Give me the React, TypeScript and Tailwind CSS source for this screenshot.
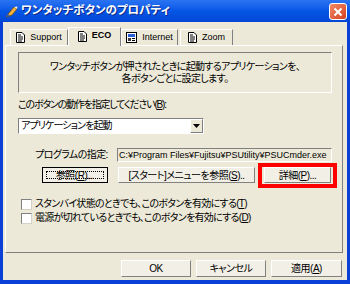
import React from "react";

const jp = "font-['Liberation_Sans','Noto_Sans_CJK_JP',sans-serif] [font-feature-settings:'palt']";

function PageIcon({ kind = "page" }: { kind?: "page" | "net" }) {
    if (kind === "net") {
        return (
            <svg width="11" height="11" viewBox="0 0 11 11" className="shrink-0">
                <rect x="0.5" y="0.5" width="10" height="10" fill="#fff" stroke="#000" />
                <rect x="2" y="2" width="7" height="3" fill="#2b5fd9" />
                <rect x="2" y="6" width="3" height="3" fill="#3a3a3a" />
                <rect x="6" y="6" width="3" height="1" fill="#000" />
                <rect x="6" y="8" width="3" height="1" fill="#000" />
            </svg>
        );
    }
    return (
        <svg width="9" height="11" viewBox="0 0 9 11" className="shrink-0">
            <path d="M0.5 0.5 H6 L8.5 3 V10.5 H0.5 Z" fill="#fff" stroke="#000" />
            <path d="M2 3 H5 M2 5 H7 M2 7 H7 M2 9 H6" stroke="#000" strokeWidth="1" />
        </svg>
    );
}

function Tab({ label, w, active, icon }: { label: string; w: number; active?: boolean; icon?: "page" | "net" }) {
    return (
        <div
            style={{ width: w }}
            className={
                active
                    ? "h-[19px] -mb-[1px] z-10 flex items-center justify-center gap-[5px] bg-[#ece9d8] border-t border-l border-white border-r border-r-[#808080] text-[9px] font-bold pb-[2px]"
                    : "h-[16px] flex items-center justify-center gap-[5px] bg-[#ece9d8] border-t border-l border-white border-r border-r-[#808080] text-[9px]"
            }
        >
            <PageIcon kind={icon} />
            <span>{label}</span>
        </div>
    );
}

function Btn({ children, w, def }: { children: React.ReactNode; w: number; def?: boolean }) {
    return (
        <div
            style={{ width: w }}
            className={
                def
                    ? "h-full border border-black bg-[#f1efe6] flex items-stretch"
                    : "h-full bg-[#f1efe6] border border-t-white border-l-white border-b-[#808080] border-r-[#808080] flex items-center justify-center text-[10px] tracking-[-0.5px]"
            }
        >
            {def ? (
                <div className="flex-1 m-[3px] border border-dotted border-black flex items-center justify-center text-[10px] tracking-[-0.5px]">
                    {children}
                </div>
            ) : (
                children
            )}
        </div>
    );
}

function Check({ children }: { children: React.ReactNode }) {
    return (
        <div className="flex items-center h-[12px] gap-[3px] text-[10px] leading-[12px] tracking-[-0.7px]">
            <div className="w-[11px] h-[11px] bg-white border border-t-[#808080] border-l-[#808080] border-b-[#d4d0c8] border-r-[#d4d0c8] shrink-0" />
            <span>{children}</span>
        </div>
    );
}

export default function App() {
    return (
        <div className={`w-[350px] h-[284px] bg-[#0a3fd8] flex flex-col overflow-hidden text-black ${jp}`}>
            {/* Title bar */}
            <div className="h-[22px] shrink-0 flex items-center pl-[5px] pr-[3px] bg-gradient-to-b from-[#2a74f2] via-[#0556e6] to-[#0446d4]">
                <svg width="13" height="13" viewBox="0 0 13 13" className="shrink-0">
                    <path d="M1 12 L4 8 L9 2 L12 4 L7 10 Z" fill="#f2b43c" stroke="#7a4a10" strokeWidth="0.8" />
                    <path d="M9 2 L12 4 L12.5 1.5 Z" fill="#f7f7f7" />
                    <path d="M1 12 L3 9 L4.5 10.5 Z" fill="#3358c8" />
                </svg>
                <span className="ml-[3px] text-white font-bold text-[11.5px] leading-none [text-shadow:1px_1px_0_#0b2a8a]">
                    ワンタッチボタンのプロパティ
                </span>
                <div className="ml-auto w-[18px] h-[17px] rounded-[3px] border border-white bg-gradient-to-br from-[#f08a66] to-[#d4401a] flex items-center justify-center mt-[1px]">
                    <svg width="10" height="10" viewBox="0 0 10 10">
                        <path d="M1.5 1.5 L8.5 8.5 M8.5 1.5 L1.5 8.5" stroke="#fff" strokeWidth="2" />
                    </svg>
                </div>
            </div>

            {/* Body */}
            <div className="h-[258px] mx-[3px] bg-[#ece9d8] flex flex-col">
                {/* Tabs */}
                <div className="h-[23px] pt-[4px] flex items-end pl-[7px]">
                    <Tab label="Support" w={58} />
                    <Tab label="ECO" w={53} active />
                    <Tab label="Internet" w={57} icon="net" />
                    <div className="w-[2px]" />
                    <Tab label="Zoom" w={53} />
                </div>

                {/* Panel */}
                <div className="ml-[2px] w-[338px] h-[208px] border border-t-white border-l-white border-b-[#808080] border-r-[#808080] flex flex-col pl-[12px]">
                    <div className="mt-[6px] w-[314px] h-[41px] border border-t-[#808080] border-l-[#808080] border-b-white border-r-white flex flex-col items-center justify-center text-[10px] leading-[12px] tracking-[-0.65px]">
                        <span>ワンタッチボタンが押されたときに起動するアプリケーションを、</span>
                        <span>各ボタンごとに設定します。</span>
                    </div>

                    <div className="mt-[6px] h-[12px] text-[10px] leading-[12px] tracking-[-1.2px]">
                        このボタンの動作を指定してください(<span className="underline">B</span>):
                    </div>

                    <div className="mt-[7px] w-[186px] h-[16px] bg-white border border-t-[#808080] border-l-[#808080] border-b-white border-r-white flex items-center">
                        <span className="pl-[2px] text-[10px] leading-none flex-1 tracking-[-0.9px]">アプリケーションを起動</span>
                        <div className="w-[13px] h-[14px] bg-[#ece9d8] border border-t-white border-l-white border-b-[#808080] border-r-[#808080] flex items-center justify-center">
                            <svg width="7" height="4" viewBox="0 0 7 4">
                                <path d="M0 0 H7 L3.5 4 Z" fill="#000" />
                            </svg>
                        </div>
                    </div>

                    <div className="mt-[14px] h-[14px] flex items-center">
                        <span className="ml-[17px] w-[82px] text-[10px] leading-none tracking-[-0.6px]">プログラムの指定:</span>
                        <div className="w-[215px] h-[14px] border border-t-[#808080] border-l-[#808080] border-b-white border-r-white flex items-center pl-[1px] text-[9px] leading-none whitespace-nowrap overflow-hidden">
                            C:¥Program Files¥Fujitsu¥PSUtility¥PSUCmder.exe
                        </div>
                    </div>

                    <div className="mt-[5px] h-[16px] flex items-center">
                        <div className="ml-[24px] h-full">
                            <Btn w={66} def>
                                参照(<span className="underline">R</span>)...
                            </Btn>
                        </div>
                        <div className="ml-[10px] h-full">
                            <Btn w={137}>
                                [スタート]メニューを参照(<span className="underline">S</span>)..
                            </Btn>
                        </div>
                        <div className="ml-[9px] h-full relative">
                            <Btn w={67}>
                                詳細(<span className="underline">P</span>)...
                            </Btn>
                            <div className="absolute -left-[6px] -right-[6px] -top-[4px] -bottom-[5px] border-[4px] border-[#ff0000]" />
                        </div>
                    </div>

                    <div className="mt-[15px] flex flex-col gap-[2px] ml-[3px]">
                        <Check>
                            スタンバイ状態のときでも、このボタンを有効にする(<span className="underline">T</span>)
                        </Check>
                        <Check>
                            電源が切れているときでも、このボタンを有効にする(<span className="underline">D</span>)
                        </Check>
                    </div>
                </div>

                {/* Bottom buttons */}
                <div className="mt-[7px] h-[17px] flex justify-end gap-[5px] pr-[5px]">
                    <Btn w={70}>OK</Btn>
                    <Btn w={70}>キャンセル</Btn>
                    <Btn w={71}>
                        適用(<span className="underline">A</span>)
                    </Btn>
                </div>
            </div>
        </div>
    );
}
